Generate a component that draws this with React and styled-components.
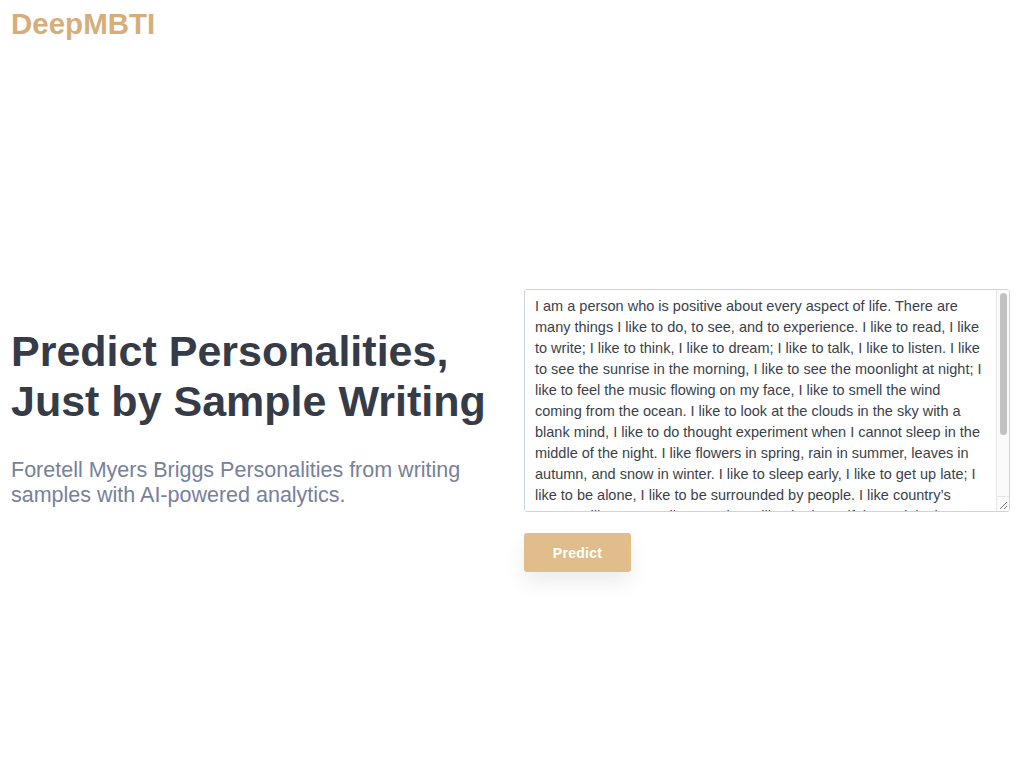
import styled, { createGlobalStyle } from "styled-components";
import { useState } from "react";

const SAMPLE =
  "I am a person who is positive about every aspect of life. There are many things I like to do, to see, and to experience. I like to read, I like to write; I like to think, I like to dream; I like to talk, I like to listen. I like to see the sunrise in the morning, I like to see the moonlight at night; I like to feel the music flowing on my face, I like to smell the wind coming from the ocean. I like to look at the clouds in the sky with a blank mind, I like to do thought experiment when I cannot sleep in the middle of the night. I like flowers in spring, rain in summer, leaves in autumn, and snow in winter. I like to sleep early, I like to get up late; I like to be alone, I like to be surrounded by people. I like country\u2019s peace, I like metropolitan\u2019s noise; I like the beautiful west lake in Hangzhou, I like the flat cornfield in Champaign.";

export default function App() {
  const [text, setText] = useState(SAMPLE);

  return (
    <>
      <GlobalStyle />
      <Page>
        <Header>
          <Logo>DeepMBTI</Logo>
        </Header>
        <Hero>
          <Intro>
            <Title>
              Predict Personalities,
              <br />
              Just by Sample Writing
            </Title>
            <Subtitle>
              Foretell Myers Briggs Personalities from writing samples with
              AI-powered analytics.
            </Subtitle>
          </Intro>
          <FormColumn onSubmit={(e) => e.preventDefault()}>
            <InputWrap>
              <SampleInput
                value={text}
                onChange={(e) => setText(e.target.value)}
              />
              {/* the headless browser hides scrollbars, so draw one */}
              <ScrollTrack>
                <ScrollThumb />
              </ScrollTrack>
              <ResizeCorner>
                <svg width="10" height="10" viewBox="0 0 10 10">
                  <path
                    d="M9 2L2 9M9 6L6 9"
                    stroke="#777"
                    strokeWidth="1"
                    fill="none"
                  />
                </svg>
              </ResizeCorner>
            </InputWrap>
            <PredictButton type="submit">Predict</PredictButton>
          </FormColumn>
        </Hero>
      </Page>
    </>
  );
}

const GlobalStyle = createGlobalStyle`
  body {
    margin: 0;
    background: #ffffff;
    font-family: "Liberation Sans", Arial, sans-serif;
  }
`;

const Page = styled.div`
  min-height: 100vh;
  padding: 0 10px 0 11px;
`;

const Header = styled.header`
  padding-top: 5px;
`;

const Logo = styled.h1`
  margin: 0;
  font-size: 29.5px;
  line-height: 38px;
  font-weight: 700;
  color: #d6ae7b;
`;

const Hero = styled.main`
  display: grid;
  grid-template-columns: 1fr 486px;
  gap: 24px;
  align-items: center;
  padding-top: 246px;
`;

const Intro = styled.div`
  padding-bottom: 28px;
`;

const Title = styled.h2`
  margin: 0;
  font-size: 43px;
  line-height: 50px;
  font-weight: 700;
  color: #353b47;
`;

const Subtitle = styled.p`
  margin: 32px 0 0;
  font-size: 21.5px;
  line-height: 25px;
  color: #77819a;
`;

const FormColumn = styled.form`
  display: flex;
  flex-direction: column;
  align-items: flex-start;
  gap: 21px;
`;

const InputWrap = styled.div`
  position: relative;
  width: 100%;
  height: 223px;
`;

const SampleInput = styled.textarea`
  display: block;
  box-sizing: border-box;
  width: 100%;
  height: 100%;
  margin: 0;
  padding: 6px 24px 4px 10px;
  border: 1px solid #cfd3da;
  border-radius: 3px;
  font-family: "Liberation Sans", Arial, sans-serif;
  font-size: 14.5px;
  line-height: 21px;
  color: #3a3f4a;
  resize: none;
  outline: none;
`;

const ScrollTrack = styled.div`
  position: absolute;
  top: 1px;
  right: 1px;
  bottom: 16px;
  width: 13px;
  box-sizing: border-box;
  padding: 3px 2px 0 3px;
  background: #fafafa;
  border-left: 1px solid #e6e6e6;
  border-top-right-radius: 2px;
  pointer-events: none;
`;

const ScrollThumb = styled.div`
  height: 142px;
  border-radius: 4px;
  background: #c1c1c1;
`;

const ResizeCorner = styled.div`
  position: absolute;
  right: 1px;
  bottom: 1px;
  width: 13px;
  height: 15px;
  box-sizing: border-box;
  display: flex;
  align-items: flex-end;
  justify-content: flex-end;
  padding: 0 1px 1px 0;
  background: #fafafa;
  border-left: 1px solid #e6e6e6;
  border-top: 1px solid #e6e6e6;
  border-bottom-right-radius: 2px;
  pointer-events: none;
`;

const PredictButton = styled.button`
  width: 107px;
  height: 39px;
  border: none;
  border-radius: 3px;
  background: #e0bd8b;
  color: #ffffff;
  font-family: "Liberation Sans", Arial, sans-serif;
  font-size: 14px;
  font-weight: 700;
  letter-spacing: 0.02em;
  box-shadow: 0 10px 20px rgba(0, 0, 0, 0.08);
  cursor: pointer;
`;
